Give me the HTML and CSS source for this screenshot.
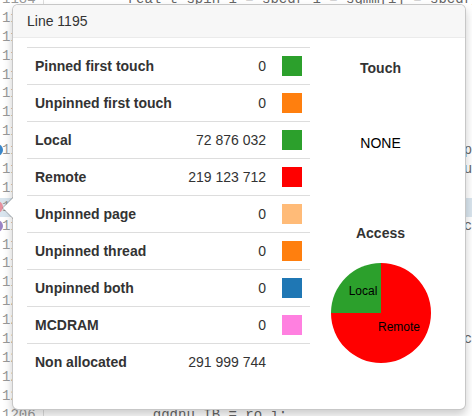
FILE: index.html
```html
<!DOCTYPE html>
<html>
<head>
<meta charset="utf-8">
<link rel="stylesheet" href="styles.css">
</head>
<body>
<div class="editor">
  <div class="line"><span class="ln">1184</span><span class="code">         real_t spin_1 = sbcdr_1 = sgmm[i] = sbcdr_2;</span></div>
  <div class="line"><span class="ln">1185</span><span class="code"></span></div>
  <div class="line"><span class="ln">1186</span><span class="code"></span></div>
  <div class="line"><span class="ln">1187</span><span class="code"></span></div>
  <div class="line"><span class="ln">1188</span><span class="code"></span></div>
  <div class="line"><span class="ln">1189</span><span class="code"></span></div>
  <div class="line"><span class="ln">1190</span><span class="code"></span></div>
  <div class="line"><span class="ln">1191</span><span class="code"></span></div>
  <div class="line"><span class="ln"><span class="mark blue"></span>1192</span><span class="code">                                                 pi</span></div>
  <div class="line"><span class="ln">1193</span><span class="code">                                                 ut</span></div>
  <div class="line"><span class="ln">1194</span><span class="code"></span></div>
  <div class="line hl"><span class="ln"><span class="mark pink"></span>1195</span><span class="code"></span></div>
  <div class="line"><span class="ln"><span class="mark purple"></span>1196</span><span class="code">                                                 co</span></div>
  <div class="line"><span class="ln">1197</span><span class="code"></span></div>
  <div class="line"><span class="ln">1198</span><span class="code"></span></div>
  <div class="line"><span class="ln">1199</span><span class="code"></span></div>
  <div class="line"><span class="ln">1200</span><span class="code"></span></div>
  <div class="line"><span class="ln">1201</span><span class="code"></span></div>
  <div class="line"><span class="ln">1202</span><span class="code">                                                 co</span></div>
  <div class="line"><span class="ln">1203</span><span class="code"></span></div>
  <div class="line"><span class="ln">1204</span><span class="code"></span></div>
  <div class="line"><span class="ln">1205</span><span class="code"></span></div>
  <div class="line"><span class="ln">1206</span><span class="code">            ggdnu_IB = ro_i;</span></div>
</div>

<div class="popover">
  <div class="arrow"></div>
  <div class="pop-title">Line 1195</div>
  <div class="pop-body">
    <table class="stats">
      <tr><th>Pinned first touch</th><td class="num">0</td><td class="sw"><span class="sq c-green"></span></td></tr>
      <tr><th>Unpinned first touch</th><td class="num">0</td><td class="sw"><span class="sq c-orange"></span></td></tr>
      <tr><th>Local</th><td class="num">72 876 032</td><td class="sw"><span class="sq c-green"></span></td></tr>
      <tr><th>Remote</th><td class="num">219 123 712</td><td class="sw"><span class="sq c-red"></span></td></tr>
      <tr><th>Unpinned page</th><td class="num">0</td><td class="sw"><span class="sq c-lorange"></span></td></tr>
      <tr><th>Unpinned thread</th><td class="num">0</td><td class="sw"><span class="sq c-orange"></span></td></tr>
      <tr><th>Unpinned both</th><td class="num">0</td><td class="sw"><span class="sq c-blue"></span></td></tr>
      <tr><th>MCDRAM</th><td class="num">0</td><td class="sw"><span class="sq c-pink"></span></td></tr>
      <tr><th>Non allocated</th><td class="num">291 999 744</td><td class="sw"></td></tr>
    </table>
    <div class="side">
      <div class="side-title t-touch">Touch</div>
      <div class="side-value">NONE</div>
      <div class="side-title t-access">Access</div>
      <svg class="pie" width="100" height="100" viewBox="-50 -50 100 100">
        <path d="M0,0 L0,-50 A50,50 0 1,1 -50,0 Z" fill="#ff0000"/>
        <path d="M0,0 L-50,0 A50,50 0 0,1 0,-50 Z" fill="#2ca02c"/>
        <text x="-18" y="-18" text-anchor="middle" class="pie-label">Local</text>
        <text x="18" y="18" text-anchor="middle" class="pie-label">Remote</text>
      </svg>
    </div>
  </div>
</div>
</body>
</html>
```

FILE: styles.css
```css
html, body {
  margin: 0;
  padding: 0;
  width: 472px;
  height: 416px;
  overflow: hidden;
  background: #ffffff;
}

.editor {
  margin-top: -10px;
  width: 472px;
  overflow: hidden;
  font-family: "Liberation Mono", "DejaVu Sans Mono", monospace;
  font-size: 14px;
  color: #555;
}

.line {
  display: flex;
  height: 18.9px;
  line-height: 18.9px;
  white-space: pre;
  overflow: hidden;
}

.line.hl {
  background: #d9e5ee;
}

.ln {
  position: relative;
  width: 41px;
  flex: none;
  padding-left: 2px;
  color: #999;
  border-right: 1px solid #ddd;
}

.code {
  flex: 1;
  min-width: 0;
  overflow: hidden;
  padding-left: 8px;
  color: #666;
}

.mark {
  position: absolute;
  left: -9px;
  top: 3px;
  width: 12px;
  height: 12px;
  border-radius: 50%;
}
.mark.blue { background: #3a86c8; }
.mark.pink { background: #e7909e; }
.mark.purple { background: #9b84c4; }

.popover {
  position: absolute;
  left: 12px;
  top: 4px;
  width: 454px;
  height: 406px;
  box-sizing: border-box;
  background: #fff;
  border: 1px solid rgba(0, 0, 0, 0.22);
  border-radius: 6px;
  box-shadow: 0 5px 10px rgba(0, 0, 0, 0.2);
  font-family: "Liberation Sans", Arial, sans-serif;
  font-size: 14px;
  color: #333;
}

.arrow {
  position: absolute;
  left: -11px;
  top: 192px;
  width: 0;
  height: 0;
  border-style: solid;
  border-width: 11px 11px 11px 0;
  border-color: transparent rgba(0, 0, 0, 0.25) transparent transparent;
}
.arrow::after {
  content: "";
  position: absolute;
  left: 1px;
  top: -10px;
  border-style: solid;
  border-width: 10px 10px 10px 0;
  border-color: transparent #fff transparent transparent;
}

.pop-title {
  padding: 8px 14px;
  line-height: 16px;
  background: #f7f7f7;
  border-bottom: 1px solid #ebebeb;
  border-radius: 5px 5px 0 0;
}

.pop-body {
  display: flex;
  padding: 9px 14px;
}

.stats {
  width: 283px;
  border-collapse: collapse;
  flex: none;
}

.stats th,
.stats td {
  padding: 8px;
  line-height: 20px;
  border-top: 1px solid #ddd;
  vertical-align: middle;
}

.stats th {
  text-align: left;
  font-weight: bold;
}

.stats .num {
  text-align: right;
}

.stats .sw {
  width: 20px;
}

.sq {
  display: block;
  width: 20px;
  height: 20px;
}
.c-green { background: #2ca02c; }
.c-orange { background: #ff7f0e; }
.c-red { background: #ff0000; }
.c-lorange { background: #ffbb78; }
.c-blue { background: #1f77b4; }
.c-pink { background: #ff80e0; }

.side {
  flex: 1;
  display: flex;
  flex-direction: column;
  align-items: center;
}

.side-title {
  font-weight: bold;
  line-height: 20px;
}

.t-touch { margin-top: 11px; }

.side-value {
  margin-top: 55px;
  line-height: 20px;
  color: #000;
}

.t-access { margin-top: 70px; }

.pie {
  margin-top: 20px;
  display: block;
}

.pie-label {
  font-family: "Liberation Sans", Arial, sans-serif;
  font-size: 12px;
  fill: #000;
}
```
